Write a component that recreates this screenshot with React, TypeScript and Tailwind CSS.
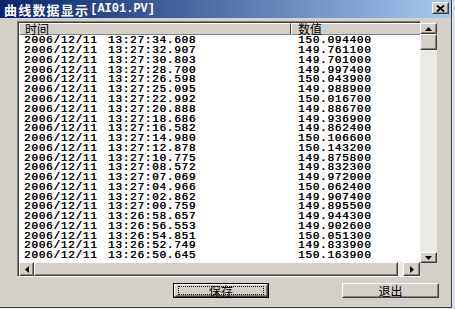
import React from "react";

const rows: [string, string][] = [
  ["13:27:34.608", "150.094400"],
  ["13:27:32.907", "149.761100"],
  ["13:27:30.803", "149.701000"],
  ["13:27:28.700", "149.997400"],
  ["13:27:26.598", "150.043900"],
  ["13:27:25.095", "149.988900"],
  ["13:27:22.992", "150.016700"],
  ["13:27:20.888", "149.886700"],
  ["13:27:18.686", "149.936900"],
  ["13:27:16.582", "149.862400"],
  ["13:27:14.980", "150.106600"],
  ["13:27:12.878", "150.143200"],
  ["13:27:10.775", "149.875800"],
  ["13:27:08.572", "149.832300"],
  ["13:27:07.069", "149.972000"],
  ["13:27:04.966", "150.062400"],
  ["13:27:02.862", "149.907400"],
  ["13:27:00.759", "149.895500"],
  ["13:26:58.657", "149.944300"],
  ["13:26:56.553", "149.902600"],
  ["13:26:54.851", "150.051300"],
  ["13:26:52.749", "149.833900"],
  ["13:26:50.645", "150.163900"],
];

const mono = { fontFamily: '"Liberation Mono", "DejaVu Sans Mono", monospace' };
const cjk = { fontFamily: '"Noto Sans CJK SC", "Noto Sans", sans-serif' };

function Raised({ className = "", children }: { className?: string; children?: React.ReactNode }) {
  return (
    <div className={"border border-t-white border-l-white border-r-[#404040] border-b-[#404040] bg-[#d4d0c8] " + className}>
      <div className="w-full h-full border border-t-[#d4d0c8] border-l-[#d4d0c8] border-r-[#808080] border-b-[#808080] flex items-center justify-center">
        {children}
      </div>
    </div>
  );
}

export default function App() {
  return (
    <div className="w-[455px] h-[309px] bg-[#dde2ea] overflow-hidden">
      <div className="w-[452px] h-[308px] bg-[#d4d0c8] border-r border-b border-r-[#404040] border-b-[#404040] flex flex-col">
        {/* Title bar */}
        <div className="h-[18px] flex items-center justify-between pl-[4px] pr-[2px] bg-gradient-to-r from-[#0a246a] to-[#a6caf0]">
          <div className="text-white font-bold flex items-center leading-none">
            <span className="text-[13px] tracking-[1.2px]" style={cjk}>曲线数据显示</span>
            <span className="text-[12px] ml-[1px]" style={mono}>[AI01.PV]</span>
          </div>
          <Raised className="w-[17px] h-[12px] mt-[-2px]">
            <svg width="9" height="7" viewBox="0 0 9 7">
              <path d="M1 0.5 L8 6.5 M8 0.5 L1 6.5" stroke="#000" strokeWidth="1.8" />
            </svg>
          </Raised>
        </div>

        {/* Content */}
        <div className="flex pl-[17px] pt-[3px]">
          {/* List */}
          <div className="w-[403px] h-[256px] border-t border-l border-t-[#808080] border-l-[#808080] border-b border-b-white flex flex-col">
            <div className="flex-1 border-t border-l border-t-[#404040] border-l-[#404040] flex flex-col">
              {/* header */}
              <div className="h-[12px] flex shrink-0">
                <div className="w-[272px] h-full border-r border-r-[#404040] border-t border-l border-t-white border-l-white bg-[#d4d0c8] flex items-center pl-[5px] border-b border-b-[#808080]">
                  <span className="text-[12px] leading-[10px] text-black" style={cjk}>时间</span>
                </div>
                <div className="flex-1 h-full border-t border-l border-t-white border-l-white bg-[#d4d0c8] flex items-center pl-[6px] border-b border-b-[#808080]">
                  <span className="text-[12px] leading-[10px] text-black" style={cjk}>数值</span>
                </div>
              </div>
              {/* rows */}
              <div className="flex-1 bg-white pt-[1px] overflow-hidden">
                {rows.map(([t, v], i) => (
                  <div key={i} className="flex h-[9.77px] items-center text-[11px] leading-[9px] tracking-[0.75px] text-black pl-[5px] whitespace-pre [text-shadow:0.3px_0_0_#000]" style={mono}>
                    <span className="w-[84px]">2006/12/11</span>
                    <span className="w-[190px]">{t}</span>
                    <span>{v}</span>
                  </div>
                ))}
              </div>
              {/* horizontal scrollbar */}
              <div className="h-[14px] flex shrink-0 bg-[#ebe9e4]">
                <Raised className="w-[15px] h-full">
                  <svg width="4" height="7" viewBox="0 0 4 7"><path d="M4 0 L0 3.5 L4 7 Z" fill="#000" /></svg>
                </Raised>
                <Raised className="w-[364px] h-full" />
                <div className="flex-1" />
                <Raised className="w-[17px] h-full">
                  <svg width="4" height="7" viewBox="0 0 4 7"><path d="M0 0 L4 3.5 L0 7 Z" fill="#000" /></svg>
                </Raised>
              </div>
            </div>
          </div>
          {/* vertical scrollbar */}
          <div className="w-[17px] h-[240px] mt-[2px] bg-[#ebe9e4] flex flex-col">
            <Raised className="w-full h-[11px]">
              <svg width="7" height="4" viewBox="0 0 7 4"><path d="M0 4 L3.5 0 L7 4 Z" fill="#000" /></svg>
            </Raised>
            <Raised className="w-full h-[16px]" />
            <div className="flex-1" />
            <Raised className="w-full h-[11px]">
              <svg width="7" height="4" viewBox="0 0 7 4"><path d="M0 0 L3.5 4 L7 0 Z" fill="#000" /></svg>
            </Raised>
          </div>
        </div>

        {/* Buttons */}
        <div className="flex mt-[6px]">
          <div className="ml-[173px] w-[96px] h-[15px] border border-black">
            <Raised className="w-full h-full">
              <div className="w-[86px] h-[9px] border border-dotted border-black flex items-center justify-center">
                <span className="text-[12px] leading-[10px] text-black" style={cjk}>保存</span>
              </div>
            </Raised>
          </div>
          <Raised className="ml-[73px] w-[97px] h-[15px]">
            <span className="text-[12px] leading-[10px] text-black" style={cjk}>退出</span>
          </Raised>
        </div>
      </div>
    </div>
  );
}
